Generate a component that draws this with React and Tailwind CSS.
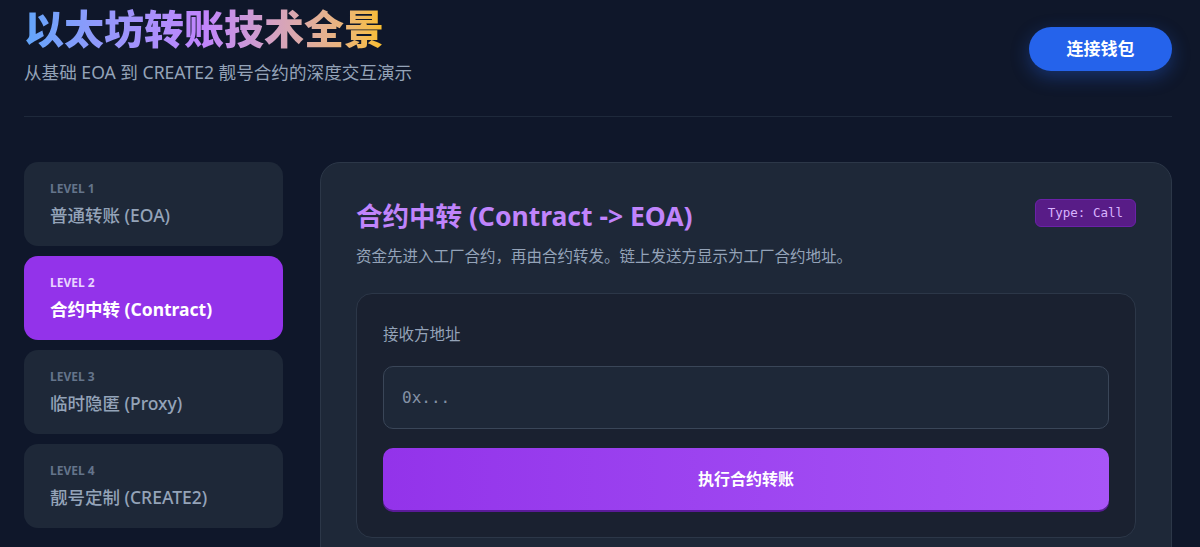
import React, { useState } from 'react';

const levels = [
  { id: 1, title: '普通转账 (EOA)' },
  { id: 2, title: '合约中转 (Contract)' },
  { id: 3, title: '临时隐匿 (Proxy)' },
  { id: 4, title: '靓号定制 (CREATE2)' },
];

const font = { fontFamily: '"Noto Sans", "Noto Sans CJK SC", sans-serif' };

export default function App() {
  const [active, setActive] = useState(2);
  const [address, setAddress] = useState('');

  return (
    <div className="min-h-screen bg-[#0f172a] pl-6 pr-7" style={font}>
      {/* Header */}
      <header className="flex items-start justify-between border-b border-[#1e293b] pt-[1px] pb-[31px]">
        <div>
          <h1 className="w-fit bg-gradient-to-r from-[#60a5fa] via-[#c084fc] to-[#fbbf24] bg-clip-text text-[40px] font-black leading-[56px] text-transparent">
            以太坊转账技术全景
          </h1>
          <p className="mt-[2px] text-[17.6px] leading-[26px] text-[#94a3b8]">
            从基础 EOA 到 CREATE2 靓号合约的深度交互演示
          </p>
        </div>
        <button className="mt-[26px] h-[44px] w-[143px] rounded-full bg-[#2563eb] text-[17px] font-bold text-white shadow-[0_6px_18px_rgba(37,99,235,0.35)]">
          连接钱包
        </button>
      </header>

      <div className="mt-[45px] flex gap-[37px]">
        {/* Sidebar */}
        <nav className="flex w-[259px] shrink-0 flex-col gap-[10px]">
          {levels.map((l) => {
            const on = l.id === active;
            return (
              <div
                key={l.id}
                onClick={() => setActive(l.id)}
                className={`flex h-[84px] cursor-pointer flex-col rounded-[14px] pl-[26px] pt-[19px] ${on ? 'bg-[#9333ea]' : 'bg-[#1e2838]'}`}
              >
                <div className={`text-[12px] font-bold leading-[16px] ${on ? 'text-[#e9d5ff]' : 'text-[#64748b]'}`}>
                  LEVEL {l.id}
                </div>
                <div className={`mt-[5px] text-[17.5px] leading-[26px] ${on ? 'font-bold text-white' : 'font-medium text-[#94a3b8]'}`}>
                  {l.title}
                </div>
              </div>
            );
          })}
        </nav>

        {/* Main panel */}
        <main className="flex-1 rounded-[20px] border border-[#2c3748] bg-[#1e2838] p-[35px] pt-[37px]">
          <div className="flex items-start justify-between">
            <h2 className="text-[26.5px] font-bold leading-[32px] text-[#c084fc]">合约中转 (Contract -&gt; EOA)</h2>
            <span className="mt-[-1px] rounded-md border border-[#6b21a8] bg-[#581c87] px-3 py-[5px] font-['DejaVu_Sans_Mono',monospace] text-[12.5px] leading-[16px] text-[#d8b4fe]">
              Type: Call
            </span>
          </div>
          <p className="mt-[13px] text-[15.5px] leading-[22px] text-[#94a3b8]">
            资金先进入工厂合约，再由合约转发。链上发送方显示为工厂合约地址。
          </p>

          <div className="mt-[26px] rounded-[16px] border border-[#2c3748] bg-[#1a2130] px-[26px] pt-[29px] pb-[27px]">
            <label className="block text-[15.5px] leading-[22px] text-[#94a3b8]">接收方地址</label>
            <input
              value={address}
              onChange={(e) => setAddress(e.target.value)}
              placeholder="0x..."
              className="mt-[21px] block h-[63px] w-full rounded-[10px] border border-[#3a4658] bg-[#1e2838] px-[18px] font-['DejaVu_Sans_Mono',monospace] text-[16px] text-[#cbd5e1] placeholder:text-[#8491a5] focus:outline-none"
            />
            <button className="mt-[19px] h-[62px] w-full rounded-[10px] bg-gradient-to-r from-[#9333ea] to-[#a855f7] text-[16px] font-bold text-white shadow-[0_2px_0_#5b1a99]">
              执行合约转账
            </button>
          </div>
        </main>
      </div>
    </div>
  );
}
